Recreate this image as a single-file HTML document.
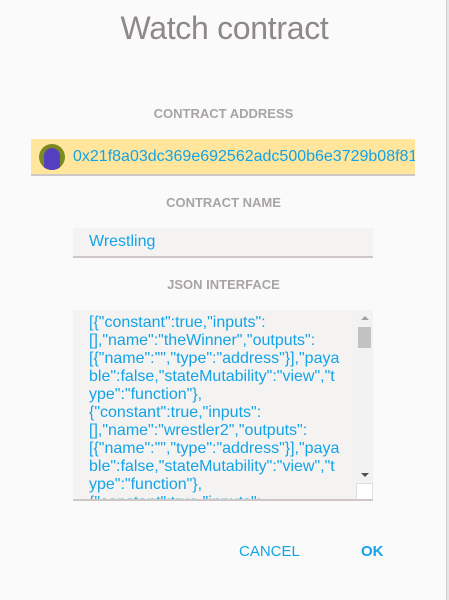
<!DOCTYPE html>
<html><head><meta charset="utf-8"><style>
*{margin:0;padding:0;box-sizing:border-box}
body{width:449px;height:600px;background:#fafafa;position:relative;overflow:hidden;font-family:"Liberation Sans",sans-serif}
.edge{position:absolute;left:446px;top:0;width:3px;height:600px;background:#e6e6e6;border-left:1px solid #cfcfcf}
.title{position:absolute;left:0;width:449px;top:10px;text-align:center;font-size:32px;color:#8e8888;letter-spacing:-0.3px}
.lbl{position:absolute;left:0;width:447px;text-align:center;font-size:13px;font-weight:bold;color:#a8a4a4}
.addr{position:absolute;left:31px;top:139px;width:384px;height:37px;background:#ffe69c;border-bottom:2px solid #cfc6c6;overflow:hidden;white-space:nowrap}
.av{position:absolute;left:8px;top:5px;width:26px;height:26px;border-radius:50%;background:#7a8a20;overflow:hidden}
.av i{position:absolute;left:5px;top:4px;width:16px;height:26px;border-radius:8px 8px 0 0;background:#5240c0}
.addr span{position:absolute;left:42px;top:9px;font-size:16px;color:#14a3e6}
.name{position:absolute;left:73px;top:228px;width:300px;height:30px;background:#f4f3f2;border-bottom:2px solid #cfc6c6;font-size:16px;color:#14a3e6;padding:5px 0 0 16px}
.ta{position:absolute;left:73px;top:310px;width:300px;height:191px;background:#f4f3f2;border-bottom:2px solid #cfc6c6;overflow:hidden}
.ta pre{position:absolute;left:16px;top:4px;font-family:"Liberation Sans",sans-serif;font-size:16px;line-height:18px;color:#14a3e6;white-space:pre}
.sb{position:absolute;left:283px;top:0;width:17px;height:173px;background:#f2f2f2}
.sb .th{position:absolute;left:2px;top:17px;width:13px;height:21px;background:#c2c2c2}
.sb .up,.sb .dn{position:absolute;left:5px;width:0;height:0;border-left:4px solid transparent;border-right:4px solid transparent}
.sb .up{top:6px;border-bottom:4px solid #a0a0a0}
.sb .dn{top:163px;border-top:4px solid #505050}
.rz{position:absolute;left:283px;top:173px;width:17px;height:18px;background:#fff;border:1px solid #ddd}
.btn{position:absolute;top:543px;font-size:15px;color:#14a3e6}
</style></head><body>
<div class="edge"></div>
<div class="title">Watch contract</div>
<div class="lbl" style="top:106px">CONTRACT ADDRESS</div>
<div class="addr"><div class="av"><i></i></div><span>0x21f8a03dc369e692562adc500b6e3729b08f81</span></div>
<div class="lbl" style="top:195px">CONTRACT NAME</div>
<div class="name">Wrestling</div>
<div class="lbl" style="top:277px">JSON INTERFACE</div>
<div class="ta"><pre>[{"constant":true,"inputs":
[],"name":"theWinner","outputs":
[{"name":"","type":"address"}],"paya
ble":false,"stateMutability":"view","t
ype":"function"},
{"constant":true,"inputs":
[],"name":"wrestler2","outputs":
[{"name":"","type":"address"}],"paya
ble":false,"stateMutability":"view","t
ype":"function"},
{"constant":true,"inputs":</pre>
<div class="sb"><div class="up"></div><div class="th"></div><div class="dn"></div></div><div class="rz"></div></div>
<div class="btn" style="left:239px">CANCEL</div>
<div class="btn" style="left:361px;font-weight:bold">OK</div>
</body></html>
